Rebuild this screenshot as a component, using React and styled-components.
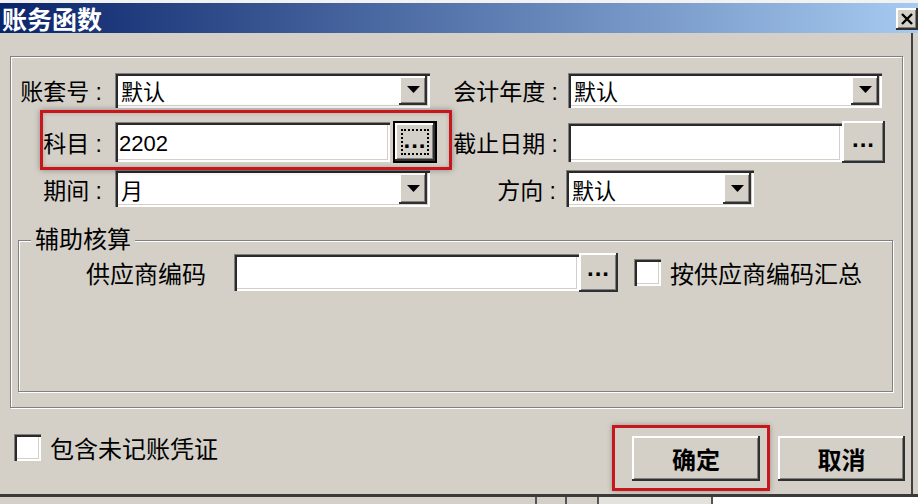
import styled, { createGlobalStyle, css } from "styled-components";

const GlobalStyle = createGlobalStyle`
  html, body {
    margin: 0;
    padding: 0;
    background: #d4d0c8;
  }
  body {
    width: 918px;
    height: 504px;
    overflow: hidden;
    font-family: "Liberation Sans", "Noto Sans CJK SC", sans-serif;
    color: #000;
  }
`;

const raised = css`
  background: #d4d0c8;
  box-shadow: inset -2px -2px 0 #303030, inset 2px 2px 0 #ffffff,
    inset -3px -3px 0 #808080;
`;

const sunken = css`
  background: #ffffff;
  box-shadow: inset 1px 1px 0 #808080, inset 3px 3px 0 #2a2a2a,
    inset -2px -2px 0 #ffffff, inset -3px -3px 0 #d4d0c8;
`;

const Window = styled.div`
  width: 918px;
  height: 504px;
  display: flex;
  flex-direction: column;
  background: #d4d0c8;
`;

const TopEdge = styled.div`
  height: 3px;
  background: #f2f2f2;
`;

const TitleBar = styled.div`
  height: 30px;
  display: flex;
  align-items: center;
  justify-content: space-between;
  background: linear-gradient(to right, #0a246a 0%, #a6caf0 100%);
`;

const Title = styled.span`
  padding-left: 2px;
  color: #fff;
  font-size: 25px;
  font-weight: bold;
`;

const CloseBtn = styled.span`
  ${raised};
  width: 22px;
  height: 22px;
  margin-top: 2px;
  display: flex;
  align-items: center;
  justify-content: center;
`;

const Body = styled.div`
  flex: 1;
  display: flex;
  flex-direction: column;
  padding: 23px 6px 0 10px;
  margin-right: 5px;
  border-right: 2px solid #404040;
`;

const Frame = styled.div`
  position: relative;
  box-sizing: border-box;
  height: 352px;
  margin-right: 2px;
  padding: 15px 9px 0 1px;
  border: 1px solid #808080;
  box-shadow: 1px 1px 0 #fff, inset 1px 1px 0 #fff;
`;

const FormRow = styled.div`
  display: flex;
  align-items: center;
  height: ${(p) => p.$h}px;
  margin-top: ${(p) => p.$mt || 0}px;
`;

const Cell = styled.div`
  display: flex;
  align-items: center;
  width: ${(p) => (p.$w ? `${p.$w}px` : "auto")};
  flex: ${(p) => (p.$w ? "none" : 1)};
`;

const Label = styled.span`
  width: ${(p) => p.$w}px;
  margin-right: ${(p) => p.$gap}px;
  text-align: right;
  font-size: 23px;
  white-space: pre;
`;

const Combo = styled.div`
  ${sunken};
  box-sizing: border-box;
  width: ${(p) => p.$w}px;
  height: ${(p) => p.$h}px;
  padding: 3px 3px 3px 6px;
  display: flex;
  align-items: center;
  justify-content: space-between;
  font-size: 22px;
`;

const DropBtn = styled.span`
  ${raised};
  width: 28px;
  align-self: stretch;
  display: flex;
  align-items: center;
  justify-content: center;
`;

const TextBox = styled.div`
  ${sunken};
  box-sizing: border-box;
  width: ${(p) => p.$w}px;
  height: ${(p) => p.$h}px;
  padding: 3px 6px 0 4px;
  display: flex;
  align-items: center;
  font-size: 22px;
`;

const PickBtn = styled.span`
  ${raised};
  position: relative;
  box-sizing: border-box;
  width: ${(p) => p.$w}px;
  height: ${(p) => p.$h}px;
  margin-left: ${(p) => p.$ml || 0}px;
  display: flex;
  align-items: flex-end;
  justify-content: center;
  padding-bottom: 12px;
  font-size: 24px;
  font-weight: bold;
  line-height: 1;
  letter-spacing: 1px;
  ${(p) =>
    p.$focused &&
    css`
      border: 2px solid #000;
      padding-bottom: 9px;
    `}
`;

const FocusRect = styled.span`
  position: absolute;
  inset: 6px;
  border: 2px dotted #000;
`;

const Annotation = styled.div`
  position: absolute;
  left: 29px;
  top: 53px;
  width: 412px;
  height: 60px;
  box-sizing: border-box;
  border: 3px solid #c8161d;
  box-shadow: 0 0 6px rgba(0, 0, 0, 0.35), inset 0 0 4px rgba(0, 0, 0, 0.2);
  pointer-events: none;
`;

const Group = styled.fieldset`
  box-sizing: border-box;
  height: 164px;
  margin: 21px 0 0 6px;
  padding: 1px 0 0 0;
  border: 1px solid #808080;
  box-shadow: 1px 1px 0 #fff, inset 1px 1px 0 #fff;
`;

const Legend = styled.legend`
  margin-left: 12px;
  padding: 0 4px;
  font-size: 24px;
  line-height: 24px;
  background: #d4d0c8;
`;

const GroupRow = styled.div`
  display: flex;
  align-items: center;
  height: 39px;
`;

const GroupLabel = styled.span`
  margin: 0 28px 0 67px;
  font-size: 24px;
`;

const CheckBox = styled.span`
  ${sunken};
  box-sizing: border-box;
  width: ${(p) => p.$s}px;
  height: ${(p) => p.$s}px;
  margin-left: ${(p) => p.$ml || 0}px;
  flex: none;
`;

const CheckText = styled.span`
  margin-left: ${(p) => p.$ml}px;
  font-size: 24px;
`;

const Footer = styled.div`
  flex: 1;
  display: flex;
  align-items: flex-start;
  justify-content: space-between;
  padding-left: 4px;
`;

const CheckRow = styled.div`
  display: flex;
  align-items: center;
  margin-top: 22px;
`;

const Buttons = styled.div`
  display: flex;
  align-items: flex-start;
  gap: 8px;
  margin-top: 17px;
`;

const Highlight = styled.div`
  padding: 8px 7px 7px 17px;
  border: 3px solid #c8161d;
  box-shadow: 0 0 5px rgba(0, 0, 0, 0.3);
`;

const Button = styled.span`
  ${raised};
  box-sizing: border-box;
  width: ${(p) => p.$w}px;
  height: 45px;
  margin-top: ${(p) => p.$mt || 0}px;
  display: flex;
  align-items: center;
  justify-content: center;
  font-size: 24px;
  font-weight: bold;
`;

const Strip = styled.div`
  height: 7px;
  display: flex;
  border-top: 3px solid #3a3a3a;
`;

const StripSeg = styled.span`
  width: ${(p) => (p.$w ? `${p.$w}px` : "auto")};
  flex: ${(p) => (p.$w ? "none" : 1)};
  background: ${(p) => p.$bg};
  border-right: ${(p) => (p.$sep ? "2px solid #555" : "none")};
`;

const Arrow = () => (
  <svg width="13" height="8" viewBox="0 0 13 8">
    <polygon points="0,0 13,0 6.5,7" fill="#000" />
  </svg>
);

const CloseIcon = () => (
  <svg width="12" height="12" viewBox="0 0 12 12">
    <path d="M1 1 L11 11 M11 1 L1 11" stroke="#000" strokeWidth="2.4" />
  </svg>
);

const ComboField = ({ w, h, value }) => (
  <Combo $w={w} $h={h}>
    <span>{value}</span>
    <DropBtn>
      <Arrow />
    </DropBtn>
  </Combo>
);

export default function App() {
  return (
    <>
      <GlobalStyle />
      <Window>
        <TopEdge />
        <TitleBar>
          <Title>账务函数</Title>
          <CloseBtn>
            <CloseIcon />
          </CloseBtn>
        </TitleBar>
        <Body>
          <Frame>
            <FormRow $h={36}>
              <Cell $w={440}>
                <Label $w={90} $gap={13}>账套号 :</Label>
                <ComboField w={315} h={35} value="默认" />
              </Cell>
              <Cell>
                <Label $w={106} $gap={10}>会计年度 :</Label>
                <ComboField w={314} h={35} value="默认" />
              </Cell>
            </FormRow>
            <FormRow $h={42} $mt={13}>
              <Cell $w={440}>
                <Label $w={90} $gap={13}>科目 :</Label>
                <TextBox $w={275} $h={40}>2202</TextBox>
                <PickBtn $w={44} $h={42} $ml={3} $focused>
                  <FocusRect />
                  ...
                </PickBtn>
              </Cell>
              <Cell>
                <Label $w={106} $gap={10}>截止日期 :</Label>
                <TextBox $w={274} $h={39} />
                <PickBtn $w={43} $h={42}>...</PickBtn>
              </Cell>
            </FormRow>
            <FormRow $h={37} $mt={7}>
              <Cell $w={440}>
                <Label $w={90} $gap={13}>期间 :</Label>
                <ComboField w={315} h={37} value="月" />
              </Cell>
              <Cell>
                <Label $w={104} $gap={10}>方向 :</Label>
                <ComboField w={188} h={37} value="默认" />
              </Cell>
            </FormRow>
            <Group>
              <Legend>辅助核算</Legend>
              <GroupRow>
                <GroupLabel>供应商编码</GroupLabel>
                <TextBox $w={345} $h={37} />
                <PickBtn $w={39} $h={39}>...</PickBtn>
                <CheckBox $s={27} $ml={16} />
                <CheckText $ml={9}>按供应商编码汇总</CheckText>
              </GroupRow>
            </Group>
            <Annotation />
          </Frame>
          <Footer>
            <CheckRow>
              <CheckBox $s={27} />
              <CheckText $ml={9}>包含未记账凭证</CheckText>
            </CheckRow>
            <Buttons>
              <Highlight>
                <Button $w={128}>确定</Button>
              </Highlight>
              <Button $w={127} $mt={11}>取消</Button>
            </Buttons>
          </Footer>
        </Body>
        <Strip>
          <StripSeg $w={535} $bg="#d4d0c8" $sep />
          <StripSeg $w={28} $bg="#d4d0c8" $sep />
          <StripSeg $w={30} $bg="#d4d0c8" $sep />
          <StripSeg $w={112} $bg="#e4e2dc" $sep />
          <StripSeg $bg="#ffffff" />
        </Strip>
      </Window>
    </>
  );
}
